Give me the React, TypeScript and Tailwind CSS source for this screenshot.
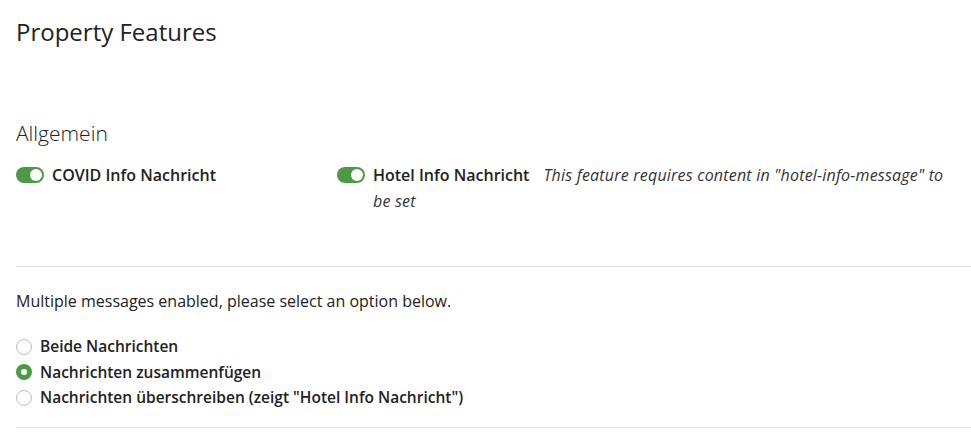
import React, { useState } from 'react'

function Toggle({ checked }: { checked: boolean }) {
  return (
    <span
      className={`flex shrink-0 items-center mt-[5px] w-[28px] h-[16px] rounded-full px-[2px] mr-2 ${
        checked ? 'bg-[#4c9a45] justify-end' : 'bg-gray-300 justify-start'
      }`}
    >
      <span className="w-[12px] h-[12px] rounded-full bg-white" />
    </span>
  )
}

function Radio({ checked, label, onClick }: { checked: boolean; label: string; onClick: () => void }) {
  return (
    <label onClick={onClick} className="flex items-center h-[25.5px] cursor-pointer">
      {checked ? (
        <span className="w-[16px] h-[16px] rounded-full bg-[#4c9a45] flex items-center justify-center mr-2">
          <span className="w-[6px] h-[6px] rounded-full bg-white" />
        </span>
      ) : (
        <span className="w-[16px] h-[16px] rounded-full border border-[#bdbdbd] bg-white mr-2" />
      )}
      <span className="text-[15.5px] font-semibold text-[#222]">{label}</span>
    </label>
  )
}

export default function App() {
  const [option, setOption] = useState(1)
  const options = [
    'Beide Nachrichten',
    'Nachrichten zusammenfügen',
    'Nachrichten überschreiben (zeigt "Hotel Info Nachricht")',
  ]

  return (
    <div className="min-h-screen bg-white pl-4 text-[#222]" style={{ fontFamily: '"Open Sans", Lato, sans-serif' }}>
      <h1 className="pt-[17px] text-[24px] font-medium leading-[30px] text-[#222]">Property Features</h1>

      <h2 className="mt-[72px] text-[21px] font-light leading-[28px]">Allgemein</h2>

      {/* Toggles */}
      <div className="mt-[15px] flex text-[16px] leading-[26px]">
        <div className="w-[321px] flex">
          <Toggle checked />
          <span className="font-semibold">COVID Info Nachricht</span>
        </div>
        <div className="flex-1 flex pr-[18px]">
          <Toggle checked />
          <div>
            <span className="font-semibold mr-[14px]">Hotel Info Nachricht</span>
            <span className="italic text-[#333] tracking-[0.2px]">This feature requires content in "hotel-info-message" to be set</span>
          </div>
        </div>
      </div>

      <div className="mt-[52px] border-t border-[#e3e3e3]" />

      <p className="mt-[23px] text-[16px] leading-[22px]">Multiple messages enabled, please select an option below.</p>

      <div className="mt-[22px]">
        {options.map((o, i) => (
          <Radio key={o} label={o} checked={option === i} onClick={() => setOption(i)} />
        ))}
      </div>

      <div className="mt-[16px] border-t border-[#e3e3e3]" />
    </div>
  )
}
